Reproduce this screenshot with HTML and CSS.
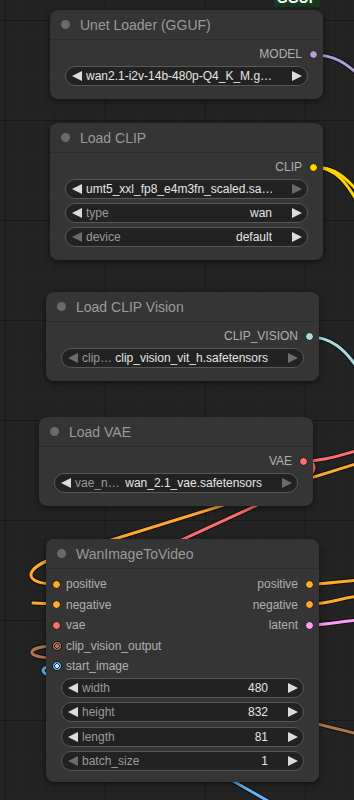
FILE: index.html
```html
<!DOCTYPE html>
<html lang="en">
<head>
    <meta charset="UTF-8" />
    <meta name="viewport" content="width=device-width, initial-scale=1" />
    <title>Wan Image To Video - workflow</title>
    <link rel="stylesheet" href="styles.css">
</head>
<body>
    <div class="canvas">
        <!-- links between nodes, drawn under the nodes -->
        <svg class="wires" width="354" height="800" viewBox="0 0 354 800">
            <defs>
                <path id="w-model" d="M314 55 C334 55 345 62 362 78" />
                <path id="w-clip-a" d="M314 167 C334 167 345 176 362 196" />
                <path id="w-clip-b" d="M314 167 C336 167 348 184 362 210" />
                <path id="w-vision" d="M310 337 C330 337 345 348 360 372" />
                <path id="w-vae-out" d="M304 461 C325 461 340 455 360 450" />
                <path id="w-pos-in" d="M362 462 L60 556 C22 568 22 584 56 584" />
                <path id="w-vae-in" d="M304 461 C320 461 318 475 290 490 L60 596 C50 605 50 625 56 625" />
                <path id="w-neg-in" d="M33 603 L56 604" />
                <path id="w-cvo" d="M56 646 C26 646 24 657 50 658 L362 735" />
                <path id="w-img" d="M56 666 C40 666 40 672 50 676 L275 805" />
                <path id="w-pos-out" d="M310 584 C330 584 340 581 360 580" />
                <path id="w-neg-out" d="M310 604 C330 604 340 598 360 596" />
                <path id="w-latent" d="M310 625 C330 625 340 621 360 620" />
            </defs>
            <g class="wire-edge">
                <use href="#w-model" /><use href="#w-clip-a" /><use href="#w-clip-b" />
                <use href="#w-vision" /><use href="#w-vae-out" /><use href="#w-pos-in" />
                <use href="#w-vae-in" /><use href="#w-neg-in" /><use href="#w-cvo" />
                <use href="#w-img" /><use href="#w-pos-out" /><use href="#w-neg-out" />
                <use href="#w-latent" />
            </g>
            <use href="#w-model" class="wire c-model" />
            <use href="#w-clip-a" class="wire c-clip" />
            <use href="#w-clip-b" class="wire c-clip" />
            <use href="#w-vision" class="wire c-vision" />
            <use href="#w-vae-out" class="wire c-vae" />
            <use href="#w-vae-in" class="wire c-vae" />
            <use href="#w-pos-in" class="wire c-cond" />
            <use href="#w-neg-in" class="wire c-cond" />
            <use href="#w-cvo" class="wire c-cvo" />
            <use href="#w-img" class="wire c-image" />
            <use href="#w-pos-out" class="wire c-cond" />
            <use href="#w-neg-out" class="wire c-cond" />
            <use href="#w-latent" class="wire c-latent" />
        </svg>

        <div class="badge">GGUF</div>

        <!-- Unet Loader -->
        <div class="node node-unet">
            <div class="node-title"><span class="title-dot"></span>Unet Loader (GGUF)</div>
            <div class="node-body">
                <div class="slot-row">
                    <span class="slot-out">MODEL<i class="dot model"></i></span>
                </div>
                <div class="widgets">
                    <div class="widget">
                        <svg class="arrow" viewBox="0 0 10 10"><polygon points="10,0 10,10 0,5" /></svg>
                        <span class="value start">wan2.1-i2v-14b-480p-Q4_K_M.g…</span>
                        <svg class="arrow" viewBox="0 0 10 10"><polygon points="0,0 0,10 10,5" /></svg>
                    </div>
                </div>
            </div>
        </div>

        <!-- Load CLIP -->
        <div class="node node-clip">
            <div class="node-title"><span class="title-dot"></span>Load CLIP</div>
            <div class="node-body">
                <div class="slot-row">
                    <span class="slot-out">CLIP<i class="dot clip"></i></span>
                </div>
                <div class="widgets">
                    <div class="widget">
                        <svg class="arrow" viewBox="0 0 10 10"><polygon points="10,0 10,10 0,5" /></svg>
                        <span class="value start">umt5_xxl_fp8_e4m3fn_scaled.sa…</span>
                        <svg class="arrow off" viewBox="0 0 10 10"><polygon points="0,0 0,10 10,5" /></svg>
                    </div>
                    <div class="widget">
                        <svg class="arrow" viewBox="0 0 10 10"><polygon points="10,0 10,10 0,5" /></svg>
                        <span class="label">type</span>
                        <span class="value">wan</span>
                        <svg class="arrow" viewBox="0 0 10 10"><polygon points="0,0 0,10 10,5" /></svg>
                    </div>
                    <div class="widget">
                        <svg class="arrow off" viewBox="0 0 10 10"><polygon points="10,0 10,10 0,5" /></svg>
                        <span class="label">device</span>
                        <span class="value">default</span>
                        <svg class="arrow" viewBox="0 0 10 10"><polygon points="0,0 0,10 10,5" /></svg>
                    </div>
                </div>
            </div>
        </div>

        <!-- Load CLIP Vision -->
        <div class="node node-vision">
            <div class="node-title"><span class="title-dot"></span>Load CLIP Vision</div>
            <div class="node-body">
                <div class="slot-row">
                    <span class="slot-out">CLIP_VISION<i class="dot vision"></i></span>
                </div>
                <div class="widgets">
                    <div class="widget">
                        <svg class="arrow off" viewBox="0 0 10 10"><polygon points="10,0 10,10 0,5" /></svg>
                        <span class="label">clip…</span>
                        <span class="value">clip_vision_vit_h.safetensors</span>
                        <svg class="arrow off" viewBox="0 0 10 10"><polygon points="0,0 0,10 10,5" /></svg>
                    </div>
                </div>
            </div>
        </div>

        <!-- Load VAE -->
        <div class="node node-vae">
            <div class="node-title"><span class="title-dot"></span>Load VAE</div>
            <div class="node-body">
                <div class="slot-row">
                    <span class="slot-out">VAE<i class="dot vae"></i></span>
                </div>
                <div class="widgets">
                    <div class="widget">
                        <svg class="arrow" viewBox="0 0 10 10"><polygon points="10,0 10,10 0,5" /></svg>
                        <span class="label">vae_n…</span>
                        <span class="value">wan_2.1_vae.safetensors</span>
                        <svg class="arrow off" viewBox="0 0 10 10"><polygon points="0,0 0,10 10,5" /></svg>
                    </div>
                </div>
            </div>
        </div>

        <!-- WanImageToVideo -->
        <div class="node node-wan">
            <div class="node-title"><span class="title-dot"></span>WanImageToVideo</div>
            <div class="node-body wan-body">
                <div class="slot-row">
                    <span class="slot-in"><i class="dot cond"></i>positive</span>
                    <span class="slot-out">positive<i class="dot cond"></i></span>
                </div>
                <div class="slot-row">
                    <span class="slot-in"><i class="dot cond"></i>negative</span>
                    <span class="slot-out">negative<i class="dot cond"></i></span>
                </div>
                <div class="slot-row">
                    <span class="slot-in"><i class="dot vae"></i>vae</span>
                    <span class="slot-out">latent<i class="dot latent"></i></span>
                </div>
                <div class="slot-row">
                    <span class="slot-in"><i class="dot ring cvo"></i>clip_vision_output</span>
                </div>
                <div class="slot-row">
                    <span class="slot-in"><i class="dot ring image"></i>start_image</span>
                </div>
                <div class="widgets">
                    <div class="widget">
                        <svg class="arrow" viewBox="0 0 10 10"><polygon points="10,0 10,10 0,5" /></svg>
                        <span class="label">width</span>
                        <span class="value">480</span>
                        <svg class="arrow" viewBox="0 0 10 10"><polygon points="0,0 0,10 10,5" /></svg>
                    </div>
                    <div class="widget">
                        <svg class="arrow" viewBox="0 0 10 10"><polygon points="10,0 10,10 0,5" /></svg>
                        <span class="label">height</span>
                        <span class="value">832</span>
                        <svg class="arrow" viewBox="0 0 10 10"><polygon points="0,0 0,10 10,5" /></svg>
                    </div>
                    <div class="widget">
                        <svg class="arrow" viewBox="0 0 10 10"><polygon points="10,0 10,10 0,5" /></svg>
                        <span class="label">length</span>
                        <span class="value">81</span>
                        <svg class="arrow" viewBox="0 0 10 10"><polygon points="0,0 0,10 10,5" /></svg>
                    </div>
                    <div class="widget">
                        <svg class="arrow off" viewBox="0 0 10 10"><polygon points="10,0 10,10 0,5" /></svg>
                        <span class="label">batch_size</span>
                        <span class="value">1</span>
                        <svg class="arrow" viewBox="0 0 10 10"><polygon points="0,0 0,10 10,5" /></svg>
                    </div>
                </div>
            </div>
        </div>
    </div>
</body>
</html>
```

FILE: styles.css
```css
body {
    margin: 0;
    background: #232323;
    font-family: "Liberation Sans", Arial, sans-serif;
}

.canvas {
    position: relative;
    width: 354px;
    height: 800px;
    overflow: hidden;
    background-color: #232323;
    background-image:
        linear-gradient(90deg, #191919 1px, transparent 1px),
        linear-gradient(#191919 1px, transparent 1px),
        linear-gradient(90deg, #202020 1px, transparent 1px),
        linear-gradient(#202020 1px, transparent 1px);
    background-size: 100px 100px, 100px 100px, 10px 10px, 10px 10px;
    background-position: 5px 20px, 5px 20px, 5px 0, 5px 0;
}

.wires {
    position: absolute;
    left: 0;
    top: 0;
}

.wire-edge use {
    fill: none;
    stroke: #111;
    stroke-width: 5;
    stroke-linecap: round;
}

.wire {
    fill: none;
    stroke-width: 3;
    stroke-linecap: round;
}

.c-model { stroke: #b39ddb; }
.c-clip { stroke: #ffd500; }
.c-vision { stroke: #a8dadc; }
.c-vae { stroke: #ff6e6e; }
.c-cond { stroke: #ffa931; }
.c-latent { stroke: #ff9cf9; }
.c-cvo { stroke: #ad7452; }
.c-image { stroke: #64b5f6; }

/* title badge of a node above the view, only its lower edge shows */
.badge {
    position: absolute;
    left: 274px;
    top: -11px;
    width: 46px;
    height: 18px;
    background: #153a1e;
    color: #fff;
    font-size: 14px;
    font-weight: 700;
    line-height: 18px;
    text-align: center;
}

.node {
    position: absolute;
    width: 273px;
    background: #353535;
    border-radius: 8px;
    box-shadow: 0 2px 6px rgba(0, 0, 0, 0.5);
}

.node-unet { left: 50px; top: 10px; }
.node-clip { left: 50px; top: 123px; }
.node-vision { left: 46px; top: 292px; }
.node-vae { left: 39px; top: 417px; width: 274px; }
.node-wan { left: 46px; top: 539px; }

.node-title {
    height: 30px;
    box-sizing: border-box;
    display: flex;
    align-items: center;
    gap: 10px;
    padding-left: 11px;
    color: #9a9a9a;
    font-size: 14px;
    border-bottom: 1px solid #2c2c2c;
}

.title-dot {
    width: 9px;
    height: 9px;
    border-radius: 50%;
    background: #6a6a6a;
}

.node-body {
    padding: 4px 0 13px;
}

.wan-body {
    padding: 5px 0 11px;
}

.slot-row {
    height: 20px;
    display: flex;
    align-items: center;
    font-size: 12px;
    color: #b0b0b0;
}

.wan-body .slot-row {
    height: 20.5px;
}

.slot-in {
    display: flex;
    align-items: center;
    gap: 5px;
    padding-left: 6px;
}

.slot-out {
    margin-left: auto;
    display: flex;
    align-items: center;
    gap: 7px;
    padding-right: 5px;
}

.dot {
    width: 9px;
    height: 9px;
    box-sizing: border-box;
    border-radius: 50%;
    border: 1px solid #151515;
}

.dot.model { background: #b39ddb; }
.dot.clip { background: #ffd500; }
.dot.vision { background: #a8dadc; }
.dot.vae { background: #ff6e6e; }
.dot.cond { background: #ffa931; }
.dot.latent { background: #ff9cf9; }

.dot.ring {
    width: 10px;
    height: 10px;
    margin-left: -0.5px;
    margin-right: -0.5px;
}

.dot.ring.cvo { background: radial-gradient(circle, #ad7452 0 1.6px, #3a2a20 1.6px 2.6px, #ad7452 2.6px); }
.dot.ring.image { background: radial-gradient(circle, #cfe8ff 0 1.6px, #1f3a55 1.6px 2.6px, #64b5f6 2.6px); }

.widgets {
    display: flex;
    flex-direction: column;
    gap: 4px;
    margin: 2px 15px 0;
}

.wan-body .widgets {
    gap: 4.5px;
    margin-top: 1px;
}

.widget {
    height: 20px;
    box-sizing: border-box;
    display: flex;
    align-items: center;
    padding: 0 5px 0 6px;
    background: #222;
    border: 1px solid #575757;
    border-radius: 10px;
    font-size: 12px;
}

.arrow {
    width: 10px;
    height: 10px;
    flex: none;
    fill: #dcdcdc;
}

.arrow.off {
    fill: #6b6b6b;
}

.label {
    margin-left: 4px;
    color: #9a9a9a;
    white-space: nowrap;
}

.value {
    flex: 1;
    margin-right: 20px;
    color: #e6e6e6;
    text-align: right;
    white-space: nowrap;
    overflow: hidden;
}

.value.start {
    margin-left: 4px;
    text-align: left;
}
```
